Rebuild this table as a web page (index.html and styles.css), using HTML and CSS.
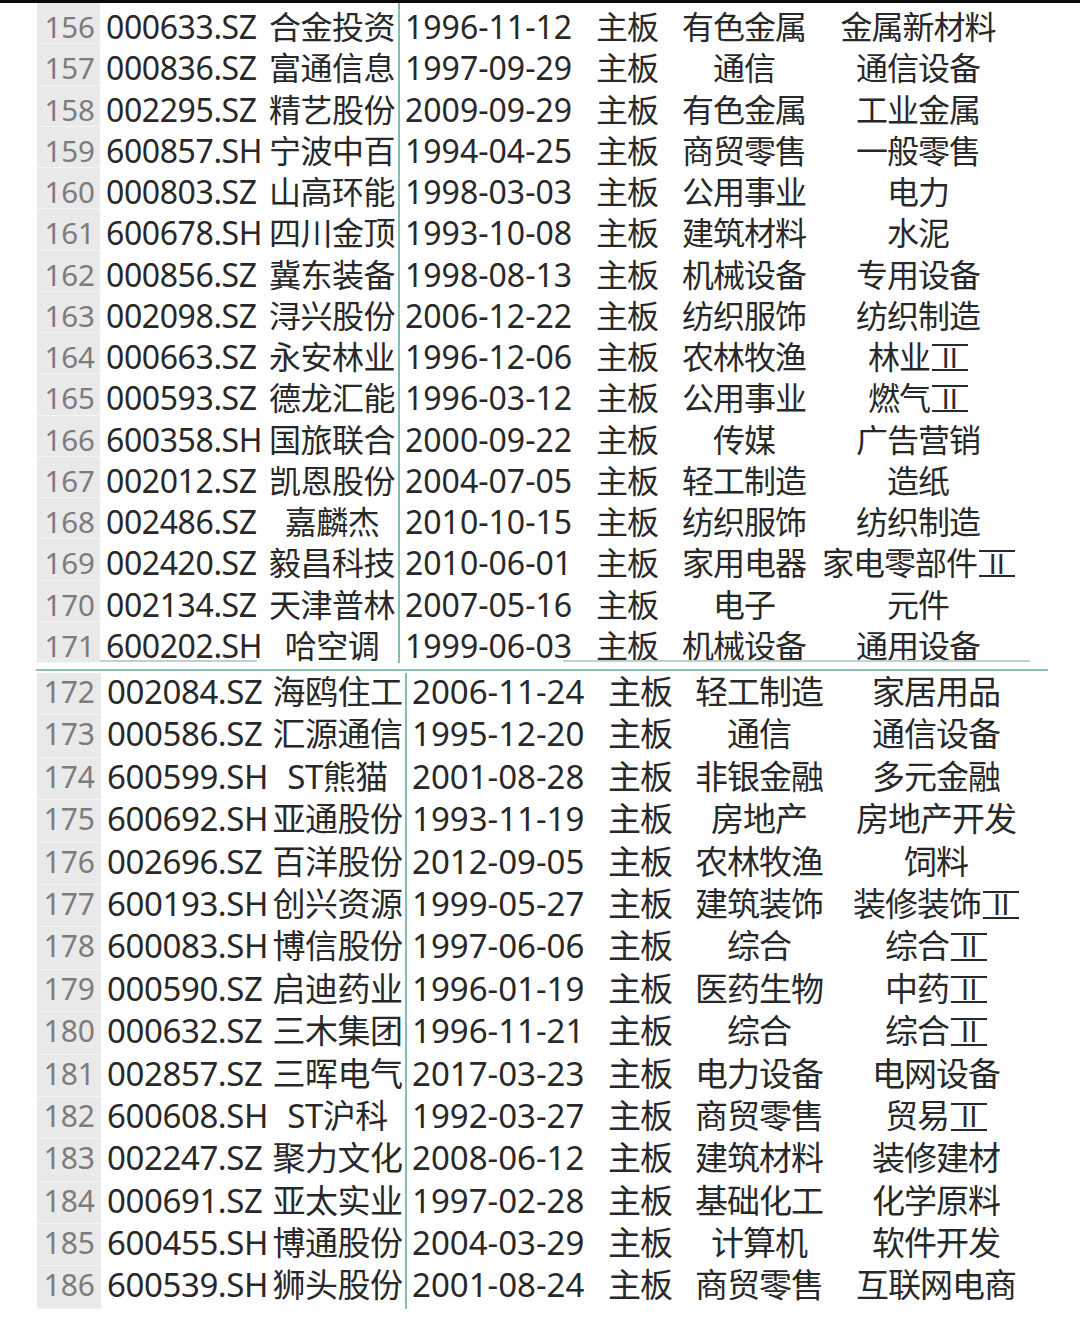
FILE: index.html
```html
<!DOCTYPE html>
<html lang="zh-CN">
<head>
<meta charset="utf-8">
<title>股票列表</title>
<link rel="stylesheet" href="styles.css">
</head>
<body>
<div class="topbar"></div>

<div class="sheet sheet-top">
  <div class="row"><div class="c num">156</div><div class="c code">000633.SZ</div><div class="c name">合金投资</div><div class="c date">1996-11-12</div><div class="c board">主板</div><div class="c ind">有色金属</div><div class="c sub">金属新材料</div></div>
  <div class="row"><div class="c num">157</div><div class="c code">000836.SZ</div><div class="c name">富通信息</div><div class="c date">1997-09-29</div><div class="c board">主板</div><div class="c ind">通信</div><div class="c sub">通信设备</div></div>
  <div class="row"><div class="c num">158</div><div class="c code">002295.SZ</div><div class="c name">精艺股份</div><div class="c date">2009-09-29</div><div class="c board">主板</div><div class="c ind">有色金属</div><div class="c sub">工业金属</div></div>
  <div class="row"><div class="c num">159</div><div class="c code">600857.SH</div><div class="c name">宁波中百</div><div class="c date">1994-04-25</div><div class="c board">主板</div><div class="c ind">商贸零售</div><div class="c sub">一般零售</div></div>
  <div class="row"><div class="c num">160</div><div class="c code">000803.SZ</div><div class="c name">山高环能</div><div class="c date">1998-03-03</div><div class="c board">主板</div><div class="c ind">公用事业</div><div class="c sub">电力</div></div>
  <div class="row"><div class="c num">161</div><div class="c code">600678.SH</div><div class="c name">四川金顶</div><div class="c date">1993-10-08</div><div class="c board">主板</div><div class="c ind">建筑材料</div><div class="c sub">水泥</div></div>
  <div class="row"><div class="c num">162</div><div class="c code">000856.SZ</div><div class="c name">冀东装备</div><div class="c date">1998-08-13</div><div class="c board">主板</div><div class="c ind">机械设备</div><div class="c sub">专用设备</div></div>
  <div class="row"><div class="c num">163</div><div class="c code">002098.SZ</div><div class="c name">浔兴股份</div><div class="c date">2006-12-22</div><div class="c board">主板</div><div class="c ind">纺织服饰</div><div class="c sub">纺织制造</div></div>
  <div class="row"><div class="c num">164</div><div class="c code">000663.SZ</div><div class="c name">永安林业</div><div class="c date">1996-12-06</div><div class="c board">主板</div><div class="c ind">农林牧渔</div><div class="c sub">林业<span class="roman">Ⅱ</span></div></div>
  <div class="row"><div class="c num">165</div><div class="c code">000593.SZ</div><div class="c name">德龙汇能</div><div class="c date">1996-03-12</div><div class="c board">主板</div><div class="c ind">公用事业</div><div class="c sub">燃气<span class="roman">Ⅱ</span></div></div>
  <div class="row"><div class="c num">166</div><div class="c code">600358.SH</div><div class="c name">国旅联合</div><div class="c date">2000-09-22</div><div class="c board">主板</div><div class="c ind">传媒</div><div class="c sub">广告营销</div></div>
  <div class="row"><div class="c num">167</div><div class="c code">002012.SZ</div><div class="c name">凯恩股份</div><div class="c date">2004-07-05</div><div class="c board">主板</div><div class="c ind">轻工制造</div><div class="c sub">造纸</div></div>
  <div class="row"><div class="c num">168</div><div class="c code">002486.SZ</div><div class="c name">嘉麟杰</div><div class="c date">2010-10-15</div><div class="c board">主板</div><div class="c ind">纺织服饰</div><div class="c sub">纺织制造</div></div>
  <div class="row"><div class="c num">169</div><div class="c code">002420.SZ</div><div class="c name">毅昌科技</div><div class="c date">2010-06-01</div><div class="c board">主板</div><div class="c ind">家用电器</div><div class="c sub">家电零部件<span class="roman">Ⅱ</span></div></div>
  <div class="row"><div class="c num">170</div><div class="c code">002134.SZ</div><div class="c name">天津普林</div><div class="c date">2007-05-16</div><div class="c board">主板</div><div class="c ind">电子</div><div class="c sub">元件</div></div>
  <div class="row"><div class="c num">171</div><div class="c code">600202.SH</div><div class="c name">哈空调</div><div class="c date">1999-06-03</div><div class="c board">主板</div><div class="c ind">机械设备</div><div class="c sub">通用设备</div></div>
</div>

<div class="cut">
  <div class="cut-gap1"></div><div class="cut-seg1"></div><div class="cut-gap2"></div><div class="cut-seg2"></div>
</div>
<div class="divider"></div>

<div class="sheet sheet-bottom">
  <div class="row"><div class="c num">172</div><div class="c code">002084.SZ</div><div class="c name">海鸥住工</div><div class="c date">2006-11-24</div><div class="c board">主板</div><div class="c ind">轻工制造</div><div class="c sub">家居用品</div></div>
  <div class="row"><div class="c num">173</div><div class="c code">000586.SZ</div><div class="c name">汇源通信</div><div class="c date">1995-12-20</div><div class="c board">主板</div><div class="c ind">通信</div><div class="c sub">通信设备</div></div>
  <div class="row"><div class="c num">174</div><div class="c code">600599.SH</div><div class="c name">ST熊猫</div><div class="c date">2001-08-28</div><div class="c board">主板</div><div class="c ind">非银金融</div><div class="c sub">多元金融</div></div>
  <div class="row"><div class="c num">175</div><div class="c code">600692.SH</div><div class="c name">亚通股份</div><div class="c date">1993-11-19</div><div class="c board">主板</div><div class="c ind">房地产</div><div class="c sub">房地产开发</div></div>
  <div class="row"><div class="c num">176</div><div class="c code">002696.SZ</div><div class="c name">百洋股份</div><div class="c date">2012-09-05</div><div class="c board">主板</div><div class="c ind">农林牧渔</div><div class="c sub">饲料</div></div>
  <div class="row"><div class="c num">177</div><div class="c code">600193.SH</div><div class="c name">创兴资源</div><div class="c date">1999-05-27</div><div class="c board">主板</div><div class="c ind">建筑装饰</div><div class="c sub">装修装饰<span class="roman">Ⅱ</span></div></div>
  <div class="row"><div class="c num">178</div><div class="c code">600083.SH</div><div class="c name">博信股份</div><div class="c date">1997-06-06</div><div class="c board">主板</div><div class="c ind">综合</div><div class="c sub">综合<span class="roman">Ⅱ</span></div></div>
  <div class="row"><div class="c num">179</div><div class="c code">000590.SZ</div><div class="c name">启迪药业</div><div class="c date">1996-01-19</div><div class="c board">主板</div><div class="c ind">医药生物</div><div class="c sub">中药<span class="roman">Ⅱ</span></div></div>
  <div class="row"><div class="c num">180</div><div class="c code">000632.SZ</div><div class="c name">三木集团</div><div class="c date">1996-11-21</div><div class="c board">主板</div><div class="c ind">综合</div><div class="c sub">综合<span class="roman">Ⅱ</span></div></div>
  <div class="row"><div class="c num">181</div><div class="c code">002857.SZ</div><div class="c name">三晖电气</div><div class="c date">2017-03-23</div><div class="c board">主板</div><div class="c ind">电力设备</div><div class="c sub">电网设备</div></div>
  <div class="row"><div class="c num">182</div><div class="c code">600608.SH</div><div class="c name">ST沪科</div><div class="c date">1992-03-27</div><div class="c board">主板</div><div class="c ind">商贸零售</div><div class="c sub">贸易<span class="roman">Ⅱ</span></div></div>
  <div class="row"><div class="c num">183</div><div class="c code">002247.SZ</div><div class="c name">聚力文化</div><div class="c date">2008-06-12</div><div class="c board">主板</div><div class="c ind">建筑材料</div><div class="c sub">装修建材</div></div>
  <div class="row"><div class="c num">184</div><div class="c code">000691.SZ</div><div class="c name">亚太实业</div><div class="c date">1997-02-28</div><div class="c board">主板</div><div class="c ind">基础化工</div><div class="c sub">化学原料</div></div>
  <div class="row"><div class="c num">185</div><div class="c code">600455.SH</div><div class="c name">博通股份</div><div class="c date">2004-03-29</div><div class="c board">主板</div><div class="c ind">计算机</div><div class="c sub">软件开发</div></div>
  <div class="row"><div class="c num">186</div><div class="c code">600539.SH</div><div class="c name">狮头股份</div><div class="c date">2001-08-24</div><div class="c board">主板</div><div class="c ind">商贸零售</div><div class="c sub">互联网电商</div></div>
</div>
</body>
</html>
```

FILE: styles.css
```css
* { box-sizing: border-box; }

html, body {
  margin: 0;
  padding: 0;
  background: #ffffff;
}

body {
  width: 1080px;
  height: 1338px;
  overflow: hidden;
  font-family: "Noto Sans", "Noto Sans CJK SC", sans-serif;
  color: #282828;
}

.topbar {
  height: 3px;
  background: #0a0a0a;
}

.sheet {
  display: flex;
  flex-direction: column;
  margin-left: 37px;
}

.row {
  display: flex;
  white-space: nowrap;
}

.num {
  background: #e9e9e9;
  color: #7c7c7c;
  text-align: right;
  border-bottom: 1px solid #f4f4f4;
}

.code { padding-left: 6px; letter-spacing: -0.4px; }
.name { text-align: center; }
.date { padding-left: 5px; }
.ind { text-align: center; }
.sub { text-align: center; }

/* Roman numeral Ⅱ drawn with joined top and bottom bars, as in the reference */
.roman {
  display: inline-block;
  font-family: "Noto Sans", sans-serif;
  font-size: 0.86em;
  line-height: 0.84em;
  letter-spacing: 3px;
  padding: 0 1px 0 4px;
  margin-left: 2px;
  border-top: 2px solid #282828;
  border-bottom: 2px solid #282828;
  vertical-align: 0.04em;
}

/* top sheet */
.sheet-top { font-size: 32px; }
.sheet-top .row { height: 41.25px; line-height: 38px; }
.sheet-top .c { padding-top: 5px; }
.sheet-top .num { width: 63px; padding-right: 5px; font-size: 29.5px; }
.sheet-top .code { width: 166px; }
.sheet-top .name { width: 134px; border-right: 2px solid #86bcb3; letter-spacing: -0.5px; }
.sheet-top .date { width: 196px; }
.sheet-top .board { width: 70px; letter-spacing: -1px; }
.sheet-top .ind { width: 156px; letter-spacing: -1px; }
.sheet-top .sub { width: 192px; letter-spacing: -1px; }

/* grey remnant rule under the top sheet */
.cut {
  display: flex;
  height: 2px;
  margin-top: -3px;
}
.cut-gap1 { width: 100px; }
.cut-seg1 { width: 157px; background: #c9cdcd; }
.cut-gap2 { width: 306px; }
.cut-seg2 { width: 467px; background: #c9cdcd; }

.divider {
  height: 2px;
  margin: 7px 32px 0 36px;
  background: #8cc0b8;
}

/* bottom sheet */
.sheet-bottom { font-size: 33px; margin-top: 2px; }
.sheet-bottom .row { height: 42.4px; line-height: 37px; }
.sheet-bottom .c { padding-top: 0; }
.sheet-bottom .num { width: 64px; padding-right: 6px; font-size: 30px; }
.sheet-bottom .code { width: 169px; }
.sheet-bottom .name { width: 137px; border-right: 2px solid #86bcb3; letter-spacing: -0.5px; }
.sheet-bottom .date { width: 201px; }
.sheet-bottom .board { width: 72px; letter-spacing: -1px; }
.sheet-bottom .ind { width: 158px; letter-spacing: -1px; }
.sheet-bottom .sub { width: 196px; letter-spacing: -1px; }
```
